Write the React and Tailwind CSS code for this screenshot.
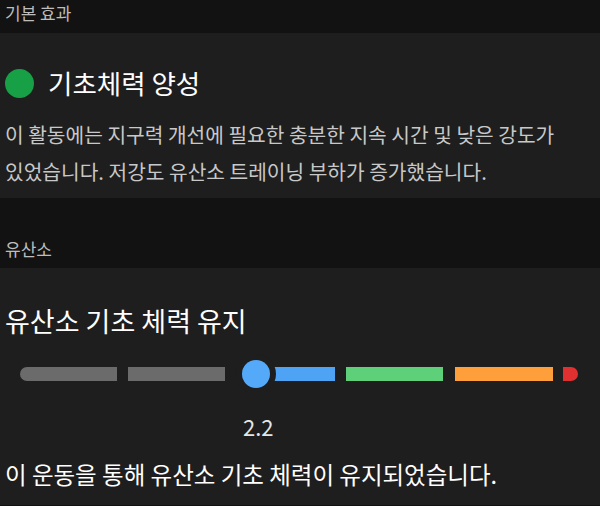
import React from 'react';

const font = { fontFamily: '"Noto Sans CJK KR", "Noto Sans", sans-serif' };

function IntensityBar({ value }) {
  return (
    <div className="flex items-center h-[28px] pl-[20px]">
      <div className="w-[97px] h-[14px] rounded-l-full bg-[#6b6b6b]" />
      <div className="w-[97px] h-[14px] ml-[11px] bg-[#6b6b6b]" />
      {/* 현재 값 위치 */}
      <div className="relative w-[73px] h-[14px] ml-[37px] bg-[#4fa3f5]">
        <div className="absolute left-[-26px] top-[-13px] w-[40px] h-[40px] rounded-full bg-[#1e1e1e] flex items-center justify-center">
          <div className="w-[28px] h-[28px] rounded-full bg-[#55a9f9]" />
        </div>
      </div>
      <div className="w-[97px] h-[14px] ml-[11px] bg-[#5ed07a]" />
      <div className="w-[98px] h-[14px] ml-[12px] bg-[#ff9f3c]" />
      <div className="w-[15px] h-[14px] ml-[10px] rounded-r-full bg-[#e0302f]" />
    </div>
  );
}

export default function App() {
  return (
    <div className="w-[600px] h-[506px] overflow-hidden bg-[#121212] break-keep" style={font}>
      {/* 기본 효과 */}
      <div className="h-[33px] px-[5px] pt-[2px] text-[17px] leading-[22px] text-[#bdbdbd]">기본 효과</div>
      <div className="bg-[#1e1e1e] px-[5px] pt-[32px] pb-[8px]">
        <div className="flex items-center h-[36px]">
          <div className="w-[29px] h-[29px] rounded-full bg-[#17a045]" />
          <span className="ml-[14px] text-[26.5px] leading-[36px] text-white">기초체력 양성</span>
        </div>
        <p className="mt-[15px] text-[20.3px] leading-[37px] text-[#c8c8c8]">
          이 활동에는 지구력 개선에 필요한 충분한 지속 시간 및 낮은 강도가 있었습니다. 저강도 유산소 트레이닝 부하가 증가했습니다.
        </p>
      </div>

      {/* 유산소 */}
      <div className="h-[70px] px-[5px] pt-[40px] text-[17px] leading-[22px] text-[#bdbdbd]">유산소</div>
      <div className="bg-[#1e1e1e] px-[5px] pt-[35px] h-[237px]">
        <div className="text-[27px] leading-[36px] text-white">유산소 기초 체력 유지</div>
        <div className="mt-[21px] -mx-[5px]">
          <IntensityBar value={2.2} />
        </div>
        <div className="mt-[24px] ml-[238px] text-[22px] leading-[28px] text-[#e6e6e6]">2.2</div>
        <div className="mt-[18px] text-[23.5px] leading-[32px] text-white">이 운동을 통해 유산소 기초 체력이 유지되었습니다.</div>
      </div>
    </div>
  );
}
